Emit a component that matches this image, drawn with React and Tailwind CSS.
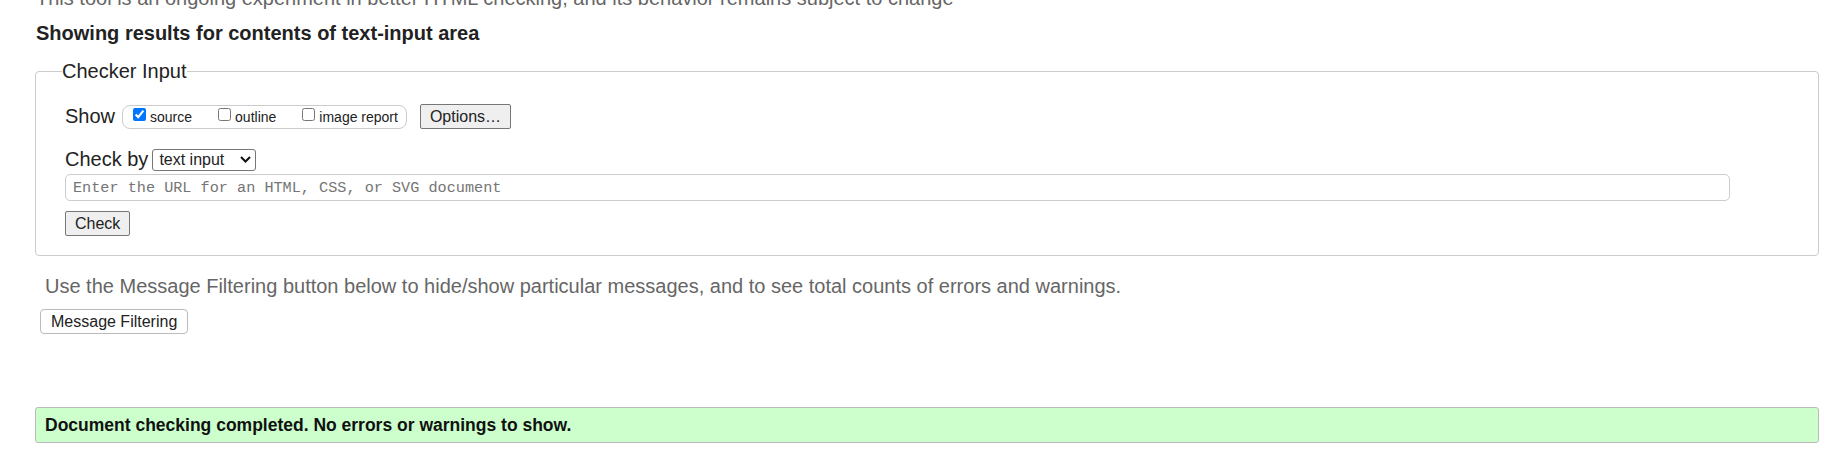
import React, { useState } from "react"

function Chevron() {
  return (
    <svg width="11" height="7" viewBox="0 0 11 7" className="pointer-events-none absolute right-[5px] top-[8px]">
      <path d="M1 1 L5.5 5.5 L10 1" fill="none" stroke="#111" strokeWidth="2" />
    </svg>
  )
}

function App() {
  const [show, setShow] = useState({ source: true, outline: false, image: false })
  const [checkBy, setCheckBy] = useState("text input")
  const [url, setUrl] = useState("")

  const toggle = (key) => setShow({ ...show, [key]: !show[key] })

  return (
    <div className="min-h-screen overflow-hidden bg-white pl-[35px] pr-[11px] font-['Liberation_Sans',Arial,sans-serif] text-[#222]">
      <p className="-mt-[13px] pl-[1px] text-[20px] leading-[23px] text-[#666]">
        This tool is an ongoing experiment in better HTML checking, and its behavior remains subject to change
      </p>
      <h2 className="mt-[12px] pl-[1px] text-[20px] font-bold leading-[23px]">
        Showing results for contents of text-input area
      </h2>

      <fieldset className="mt-[15px] rounded-[4px] border border-[#ccc] pl-[26px] pr-[29px] pt-[21px] pb-[19px]">
        <legend className="text-[20px] leading-[23px]">Checker Input</legend>
        <div className="pl-[3px]">
          <div className="flex h-[25px] items-center">
            <span className="text-[20px] leading-[23px]">Show</span>
            <div className="ml-[7px] flex h-[24px] items-center rounded-[8px] border border-[#ccc] pl-[10px] pr-[8px] text-[14px] leading-[16px]">
              <label className="flex items-center">
                <input type="checkbox" className="mb-[4px] h-[13px] w-[13px]" checked={show.source} onChange={() => toggle("source")} />
                <span className="ml-[4px]">source</span>
              </label>
              <label className="ml-[26px] flex items-center">
                <input type="checkbox" className="mb-[4px] h-[13px] w-[13px]" checked={show.outline} onChange={() => toggle("outline")} />
                <span className="ml-[4px]">outline</span>
              </label>
              <label className="ml-[26px] flex items-center">
                <input type="checkbox" className="mb-[4px] h-[13px] w-[13px]" checked={show.image} onChange={() => toggle("image")} />
                <span className="ml-[4px]">image report</span>
              </label>
            </div>
            <button className="ml-[13px] h-[25px] rounded-[2px] border border-[#767676] bg-[#efefef] px-[9px] text-[16px] leading-[18px]">
              Options…
            </button>
          </div>

          <div className="mt-[19px] flex h-[23px] items-center">
            <span className="text-[20px] leading-[23px]">Check by</span>
            <div className="relative ml-[4px]">
              <select
                value={checkBy}
                onChange={(e) => setCheckBy(e.target.value)}
                className="h-[22px] w-[104px] appearance-none rounded-[3px] border border-[#767676] bg-white pl-[6px] text-[16px] leading-[18px]"
              >
                <option>address</option>
                <option>file upload</option>
                <option>text input</option>
              </select>
              <Chevron />
            </div>
          </div>

          <input
            type="text"
            value={url}
            onChange={(e) => setUrl(e.target.value)}
            placeholder="Enter the URL for an HTML, CSS, or SVG document"
            className="mt-[3px] block h-[27px] w-[1665px] rounded-[5px] border border-[#ccc] px-[7px] font-['Liberation_Mono',monospace] text-[15.2px] placeholder:text-[#757575]"
          />

          <button className="mt-[10px] block h-[25px] rounded-[2px] border border-[#767676] bg-[#efefef] px-[9px] text-[16px] leading-[18px]">
            Check
          </button>
        </div>
      </fieldset>

      <p className="mt-[19px] pl-[10px] text-[20px] leading-[23px] text-[#666]">
        Use the Message Filtering button below to hide/show particular messages, and to see total counts of errors and warnings.
      </p>
      <button className="ml-[5px] mt-[11px] block h-[25px] rounded-[4px] border border-[#bbb] bg-white px-[10px] text-[16px] leading-[18px]">
        Message Filtering
      </button>

      <div className="mt-[73px] flex h-[36px] items-center rounded-[3px] border border-[#bbb] bg-[#ccffcc] pl-[9px] text-[17.5px] font-bold leading-[20px] text-[#111]">
        Document checking completed. No errors or warnings to show.
      </div>
    </div>
  )
}

export default App
